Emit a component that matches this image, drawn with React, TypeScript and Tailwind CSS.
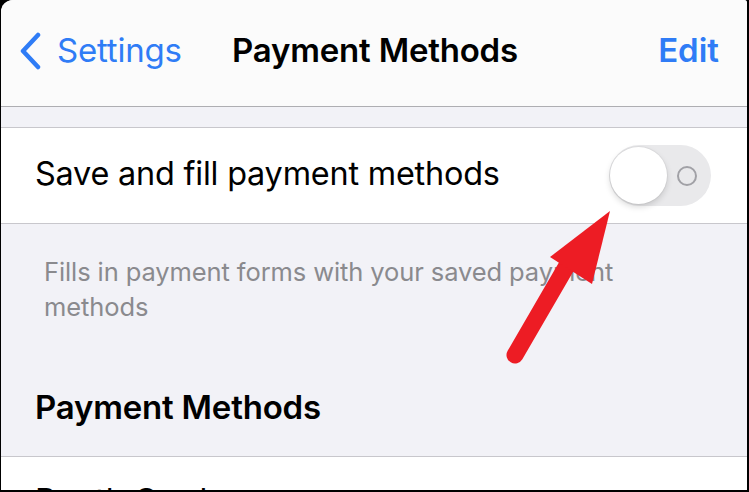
import React from 'react'

const font = { fontFamily: 'Inter, "Noto Sans", sans-serif' }

function Toggle() {
  return (
    <div className="relative w-[102px] h-[61px] rounded-full bg-[#e9e9eb]">
      <div className="absolute left-[1px] top-[2px] w-[57px] h-[57px] rounded-full bg-white shadow-[0_3px_6px_rgba(0,0,0,0.15),0_0_0_1px_rgba(0,0,0,0.04)]" />
      <div className="absolute left-[68px] top-[21px] w-[20px] h-[20px] rounded-full border-[2px] border-[#a1a1a6]" />
    </div>
  )
}

export default function App() {
  return (
    <div className="w-[749px] h-[492px] bg-black pl-[1px] pr-[2px] pb-[2px] overflow-hidden" style={font}>
      <div className="relative w-full h-full bg-[#f2f2f7] rounded-tl-[12px] rounded-tr-[3px] overflow-hidden">
        {/* nav bar */}
        <div className="h-[107px] bg-[#fbfbfb] border-b border-[#aeaeb2] grid grid-cols-[1fr_auto_1fr] items-center pb-[4px]">
          <div className="flex items-center text-[#2f7cf6] pl-[17px]">
            <svg width="24" height="38" viewBox="0 0 24 38" className="mr-[15px]">
              <path d="M20 3 L5 19 L20 35" fill="none" stroke="#2f7cf6" strokeWidth="4.5" strokeLinecap="round" strokeLinejoin="round" />
            </svg>
            <span className="text-[33px] tracking-[-0.2px]">Settings</span>
          </div>
          <div className="text-[33px] font-semibold text-black tracking-[-0.2px] pl-[2px]">Payment Methods</div>
          <div className="text-[33px] font-semibold text-[#2f7cf6] pr-[28px] text-right">Edit</div>
        </div>

        <div className="h-[20px]" />

        {/* toggle row */}
        <div className="h-[97px] bg-white border-y border-[#c8c7cc] flex items-center justify-between pl-[34px] pr-[36px]">
          <span className="text-[32.4px] text-black tracking-[-0.2px] pb-[2px]">Save and fill payment methods</span>
          <Toggle />
        </div>

        {/* footer */}
        <div className="pl-[43px] pr-[40px] pt-[30px] text-[25.5px] leading-[35px] text-[#8a8a8e] tracking-[-0.1px]">
          Fills in payment forms with your saved payment methods
        </div>

        {/* section header */}
        <div className="pl-[34px] pt-[59px] h-[132px] text-[33px] font-semibold text-black tracking-[-0.2px]">
          Payment Methods
        </div>

        <div className="bg-white border-t border-[#c8c7cc] h-[60px] pl-[34px] pt-[24px] text-[32.4px] leading-[40px] text-black">
          Booth Card
        </div>

        {/* red arrow annotation */}
        <svg className="absolute left-0 top-0 pointer-events-none" width="749" height="492">
          <line x1="514" y1="355" x2="568" y2="262" stroke="#ed1c24" strokeWidth="17" strokeLinecap="round" />
          <polygon points="609,211 549,257 591,284" fill="#ed1c24" />
        </svg>
      </div>
    </div>
  )
}
